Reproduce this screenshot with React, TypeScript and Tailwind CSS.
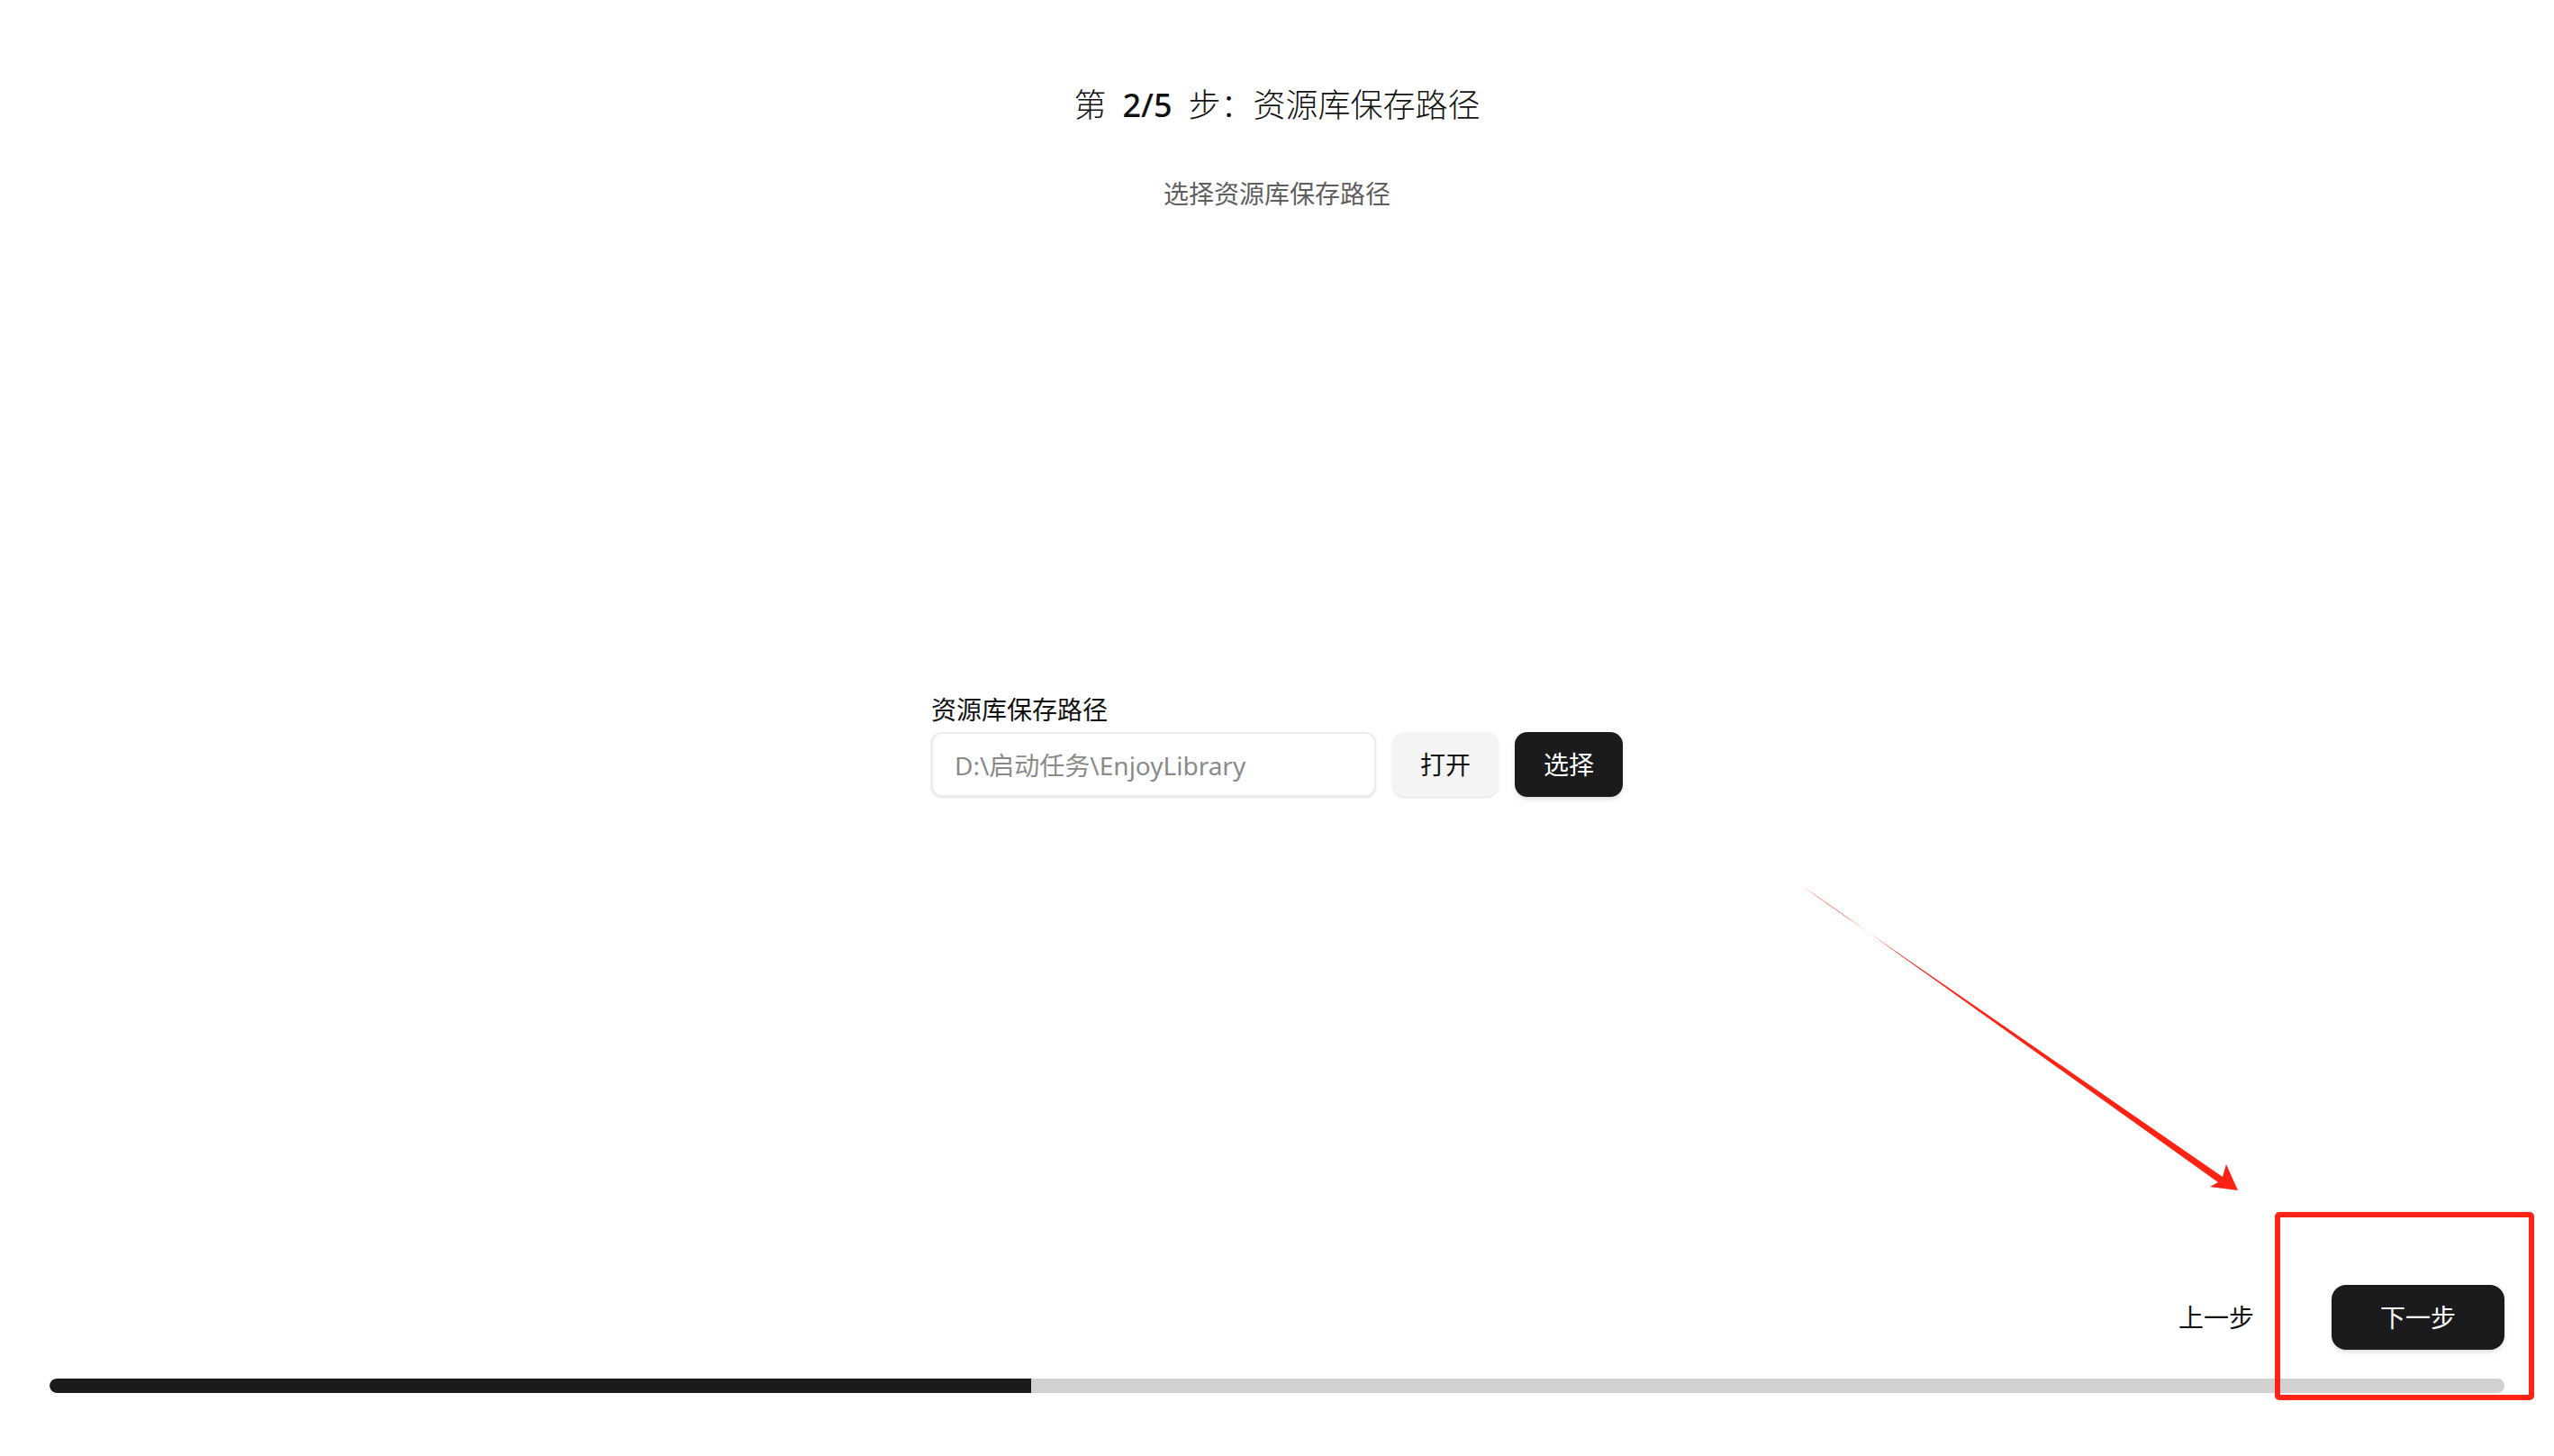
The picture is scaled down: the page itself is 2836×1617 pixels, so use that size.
export default function App() {
  return (
    <div
      className="relative flex flex-col h-screen w-full bg-white text-black overflow-hidden"
      style={{ fontFamily: '"Noto Sans", "Noto Sans CJK SC", sans-serif' }}
    >
      {/* HEADER */}
      <div className="flex flex-col items-center pt-[90px]">
        <h1 className="flex items-baseline text-[36px] leading-[54px] font-light text-[#111]">
          <span>第</span>
          <span className="mx-[18px] font-medium">2/5</span>
          <span>步：资源库保存路径</span>
        </h1>
        <p className="mt-[50px] text-[28px] leading-[42px] text-[#5f5f5f]">
          选择资源库保存路径
        </p>
      </div>

      {/* FORM */}
      <div className="flex-1 flex items-center justify-center pb-[10px]">
        <div className="flex flex-col">
          <label className="text-[28px] leading-[38px] text-[#111] mb-[6px]">
            资源库保存路径
          </label>
          <div className="flex items-center gap-[18px]">
            <input
              readOnly
              value={"D:\\启动任务\\EnjoyLibrary"}
              className="w-[494px] h-[72px] px-[24px] rounded-[12px] border-2 border-[#ececec] bg-white text-[28px] text-[#8a8a8a] shadow-sm outline-none"
            />
            <button className="w-[118px] h-[72px] rounded-[14px] bg-[#f4f4f5] text-[28px] text-[#111] shadow-sm">
              打开
            </button>
            <button className="w-[120px] h-[72px] rounded-[14px] bg-[#1b1b1d] text-[28px] text-white shadow-md">
              选择
            </button>
          </div>
        </div>
      </div>

      {/* FOOTER */}
      <div className="flex flex-col px-[55px] pb-[70px]">
        <div className="flex justify-end items-center gap-[32px]">
          <button className="w-[192px] h-[72px] rounded-[16px] text-[28px] text-[#111]">
            上一步
          </button>
          <button className="w-[192px] h-[72px] rounded-[16px] bg-[#1b1b1d] text-[28px] text-white shadow-md">
            下一步
          </button>
        </div>
        <div className="mt-[32px] h-[16px] w-full rounded-full bg-[#d1d1d1] overflow-hidden">
          <div className="h-full w-[40%] bg-[#1b1b1d] rounded-l-full" />
        </div>
      </div>

      {/* ANNOTATIONS */}
      <svg
        className="absolute inset-0 pointer-events-none"
        width="2836"
        height="1617"
        viewBox="0 0 2836 1617"
      >
        <defs>
          <linearGradient id="fade" x1="2004" y1="986" x2="2484" y2="1321" gradientUnits="userSpaceOnUse">
            <stop offset="0" stopColor="#ff2314" stopOpacity="0.1" />
            <stop offset="0.1" stopColor="#ff2314" stopOpacity="1" />
            <stop offset="1" stopColor="#ff2314" stopOpacity="1" />
          </linearGradient>
        </defs>
        <polygon
          points="2003,986 2468,1307 2472,1293 2485,1322 2454,1318 2463,1313 2004,985"
          fill="url(#fade)"
        />
      </svg>
      <div className="absolute left-[2526px] top-[1346px] w-[288px] h-[209px] border-[6px] border-[#ff2416] rounded-[5px] pointer-events-none" />
    </div>
  );
}
